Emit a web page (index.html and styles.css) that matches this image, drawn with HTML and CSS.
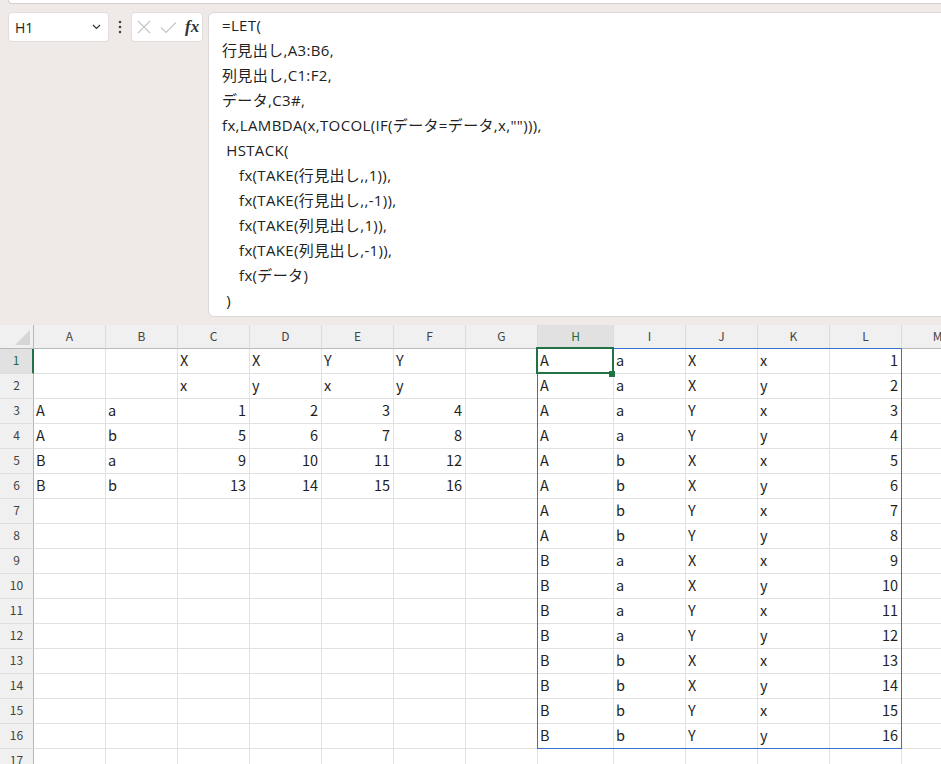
FILE: index.html
```html
<!DOCTYPE html>
<html lang="ja">
<head>
<meta charset="utf-8">
<title>Excel</title>
<link rel="stylesheet" href="styles.css">
</head>
<body>
<div class="ribbon"></div>
<div class="toolbar">
  <div class="namebox"><span class="nb-text">H1</span>
    <svg class="chev" width="9" height="6" viewBox="0 0 9 6"><path d="M1 1 L4.5 4.5 L8 1" fill="none" stroke="#333" stroke-width="1.2"/></svg>
  </div>
  <div class="dots"><svg width="4" height="14" viewBox="0 0 4 14"><circle cx="2" cy="2" r="1.3" fill="#444"/><circle cx="2" cy="7" r="1.3" fill="#444"/><circle cx="2" cy="12" r="1.3" fill="#444"/></svg></div>
  <div class="fxbox">
    <svg width="14" height="14" viewBox="0 0 14 14"><path d="M1 1 L13 13 M13 1 L1 13" stroke="#c6c3c3" stroke-width="1.1" fill="none"/></svg>
    <svg width="17" height="13" viewBox="0 0 17 13"><path d="M1 6.5 L6 11.5 L16 1.5" stroke="#c6c3c3" stroke-width="1.1" fill="none"/></svg>
    <span class="fx">fx</span>
  </div>
  <div class="formula">=LET(
行見出し,A3:B6,
列見出し,C1:F2,
データ,C3#,
fx,LAMBDA(x,TOCOL(IF(データ=データ,x,""))),
 HSTACK(
    fx(TAKE(行見出し,,1)),
    fx(TAKE(行見出し,,-1)),
    fx(TAKE(列見出し,1)),
    fx(TAKE(列見出し,-1)),
    fx(データ)
 )</div>
</div>

<div class="sheet">
  <div class="row head">
    <span class="corner"></span><span>A</span><span>B</span><span>C</span><span>D</span><span>E</span><span>F</span><span>G</span><span class="selh">H</span><span>I</span><span>J</span><span>K</span><span>L</span><span>M</span>
  </div>
  <div class="row"><span class="rh selr">1</span><span></span><span></span><span>X</span><span>X</span><span>Y</span><span>Y</span><span></span><span>A</span><span>a</span><span>X</span><span>x</span><span class="n">1</span><span></span></div>
  <div class="row"><span class="rh">2</span><span></span><span></span><span>x</span><span>y</span><span>x</span><span>y</span><span></span><span>A</span><span>a</span><span>X</span><span>y</span><span class="n">2</span><span></span></div>
  <div class="row"><span class="rh">3</span><span>A</span><span>a</span><span class="n">1</span><span class="n">2</span><span class="n">3</span><span class="n">4</span><span></span><span>A</span><span>a</span><span>Y</span><span>x</span><span class="n">3</span><span></span></div>
  <div class="row"><span class="rh">4</span><span>A</span><span>b</span><span class="n">5</span><span class="n">6</span><span class="n">7</span><span class="n">8</span><span></span><span>A</span><span>a</span><span>Y</span><span>y</span><span class="n">4</span><span></span></div>
  <div class="row"><span class="rh">5</span><span>B</span><span>a</span><span class="n">9</span><span class="n">10</span><span class="n">11</span><span class="n">12</span><span></span><span>A</span><span>b</span><span>X</span><span>x</span><span class="n">5</span><span></span></div>
  <div class="row"><span class="rh">6</span><span>B</span><span>b</span><span class="n">13</span><span class="n">14</span><span class="n">15</span><span class="n">16</span><span></span><span>A</span><span>b</span><span>X</span><span>y</span><span class="n">6</span><span></span></div>
  <div class="row"><span class="rh">7</span><span></span><span></span><span></span><span></span><span></span><span></span><span></span><span>A</span><span>b</span><span>Y</span><span>x</span><span class="n">7</span><span></span></div>
  <div class="row"><span class="rh">8</span><span></span><span></span><span></span><span></span><span></span><span></span><span></span><span>A</span><span>b</span><span>Y</span><span>y</span><span class="n">8</span><span></span></div>
  <div class="row"><span class="rh">9</span><span></span><span></span><span></span><span></span><span></span><span></span><span></span><span>B</span><span>a</span><span>X</span><span>x</span><span class="n">9</span><span></span></div>
  <div class="row"><span class="rh">10</span><span></span><span></span><span></span><span></span><span></span><span></span><span></span><span>B</span><span>a</span><span>X</span><span>y</span><span class="n">10</span><span></span></div>
  <div class="row"><span class="rh">11</span><span></span><span></span><span></span><span></span><span></span><span></span><span></span><span>B</span><span>a</span><span>Y</span><span>x</span><span class="n">11</span><span></span></div>
  <div class="row"><span class="rh">12</span><span></span><span></span><span></span><span></span><span></span><span></span><span></span><span>B</span><span>a</span><span>Y</span><span>y</span><span class="n">12</span><span></span></div>
  <div class="row"><span class="rh">13</span><span></span><span></span><span></span><span></span><span></span><span></span><span></span><span>B</span><span>b</span><span>X</span><span>x</span><span class="n">13</span><span></span></div>
  <div class="row"><span class="rh">14</span><span></span><span></span><span></span><span></span><span></span><span></span><span></span><span>B</span><span>b</span><span>X</span><span>y</span><span class="n">14</span><span></span></div>
  <div class="row"><span class="rh">15</span><span></span><span></span><span></span><span></span><span></span><span></span><span></span><span>B</span><span>b</span><span>Y</span><span>x</span><span class="n">15</span><span></span></div>
  <div class="row"><span class="rh">16</span><span></span><span></span><span></span><span></span><span></span><span></span><span></span><span>B</span><span>b</span><span>Y</span><span>y</span><span class="n">16</span><span></span></div>
  <div class="row"><span class="rh">17</span><span></span><span></span><span></span><span></span><span></span><span></span><span></span><span></span><span></span><span></span><span></span><span></span><span></span></div>
  <div class="spill"></div>
  <div class="active"></div>
  <div class="handle"></div>
</div>
</body>
</html>
```
FILE: styles.css
```css
html, body {
  margin: 0;
  padding: 0;
}
body {
  width: 941px;
  height: 764px;
  overflow: hidden;
  background: #efeae8;
  font-family: "Noto Sans CJK JP", "Noto Sans", sans-serif;
  color: #1f1f1f;
}
.ribbon {
  height: 4px;
  margin-left: 8px;
  background: #fff;
  border: 1px solid #d4cfce;
  border-top: 0;
  border-right: 0;
  border-bottom-left-radius: 6px;
  box-sizing: border-box;
}
.toolbar {
  display: flex;
  align-items: flex-start;
  padding: 8px 0 0 8px;
  margin-right: -12px;
}
.namebox {
  width: 101px;
  height: 30px;
  box-sizing: border-box;
  background: #fff;
  border: 1px solid #e2dddc;
  border-radius: 4px;
  display: flex;
  align-items: center;
  justify-content: space-between;
  padding: 0 7px 0 6px;
}
.nb-text {
  font-family: "Open Sans", "Noto Sans", sans-serif;
  font-size: 14px;
  color: #222;
}
.dots {
  width: 22px;
  height: 30px;
  display: flex;
  align-items: center;
  justify-content: center;
}
.fxbox {
  width: 72px;
  height: 30px;
  box-sizing: border-box;
  background: #fff;
  border: 1px solid #e2dddc;
  border-radius: 4px;
  display: flex;
  align-items: center;
  padding: 0 0 0 5px;
  gap: 9px;
}
.fx {
  font-family: "Liberation Serif", "DejaVu Serif", serif;
  font-style: italic;
  font-weight: bold;
  font-size: 17px;
  color: #333;
  margin-left: -1px;
}
.formula {
  flex: 1;
  margin-left: 5px;
  height: 305px;
  box-sizing: border-box;
  background: #fff;
  border: 1px solid #dcd7d6;
  border-radius: 6px 0 0 6px;
  padding: 0 0 0 13px;
  white-space: pre;
  font-family: "Open Sans", "Noto Sans CJK JP", sans-serif;
  font-size: 15px;
  letter-spacing: 0.35px;
  line-height: 25px;
  color: #222;
}
.sheet {
  position: relative;
  margin-top: 8px;
  width: 974px;
}
.row {
  display: grid;
  grid-template-columns: 34px repeat(7, 72px) 76px repeat(5, 72px);
  height: 25px;
}
.row > span {
  box-sizing: border-box;
  border-right: 1px solid #e1e1e1;
  border-bottom: 1px solid #e1e1e1;
  background: #fff;
  display: flex;
  align-items: center;
  padding: 0 3px 4px 2px;
  font-size: 14.5px;
  white-space: nowrap;
  overflow: hidden;
}
.row > span.n {
  justify-content: flex-end;
}
.row > span.rh {
  background: #f0f0f0;
  border-right: 1px solid #b9b9b9;
  border-bottom: 1px solid #dedede;
  justify-content: center;
  padding: 0 0 3px 0;
  font-size: 12px;
  color: #444;
}
.row > span.rh.selr {
  background: #e1e1e1;
  color: #1e6b41;
  border-right: 2px solid #217346;
}
.head {
  height: 24px;
}
.head > span {
  background: #f0f0f0;
  border-right: 1px solid #dcdcdc;
  border-bottom: 1px solid #b9b9b9;
  justify-content: center;
  padding: 0 0 2px 0;
  font-size: 12px;
  color: #444;
}
.head > span.corner {
  position: relative;
  border-right: 1px solid #b9b9b9;
}
.head > span.corner::after {
  content: "";
  position: absolute;
  right: 3px;
  bottom: 3px;
  width: 0;
  height: 0;
  border-left: 15px solid transparent;
  border-bottom: 15px solid #d6d6d6;
}
.head > span.selh {
  background: #e1e1e1;
  color: #1e6b41;
}
.spill {
  position: absolute;
  left: 537px;
  top: 23px;
  width: 365px;
  height: 401px;
  box-sizing: border-box;
  border: 1px solid #3670d0;
  pointer-events: none;
}
.active {
  position: absolute;
  left: 536px;
  top: 22px;
  width: 78px;
  height: 27px;
  box-sizing: border-box;
  border: 2px solid #217346;
}
.handle {
  position: absolute;
  left: 609px;
  top: 46px;
  width: 6px;
  height: 6px;
  background: #217346;
}
```
